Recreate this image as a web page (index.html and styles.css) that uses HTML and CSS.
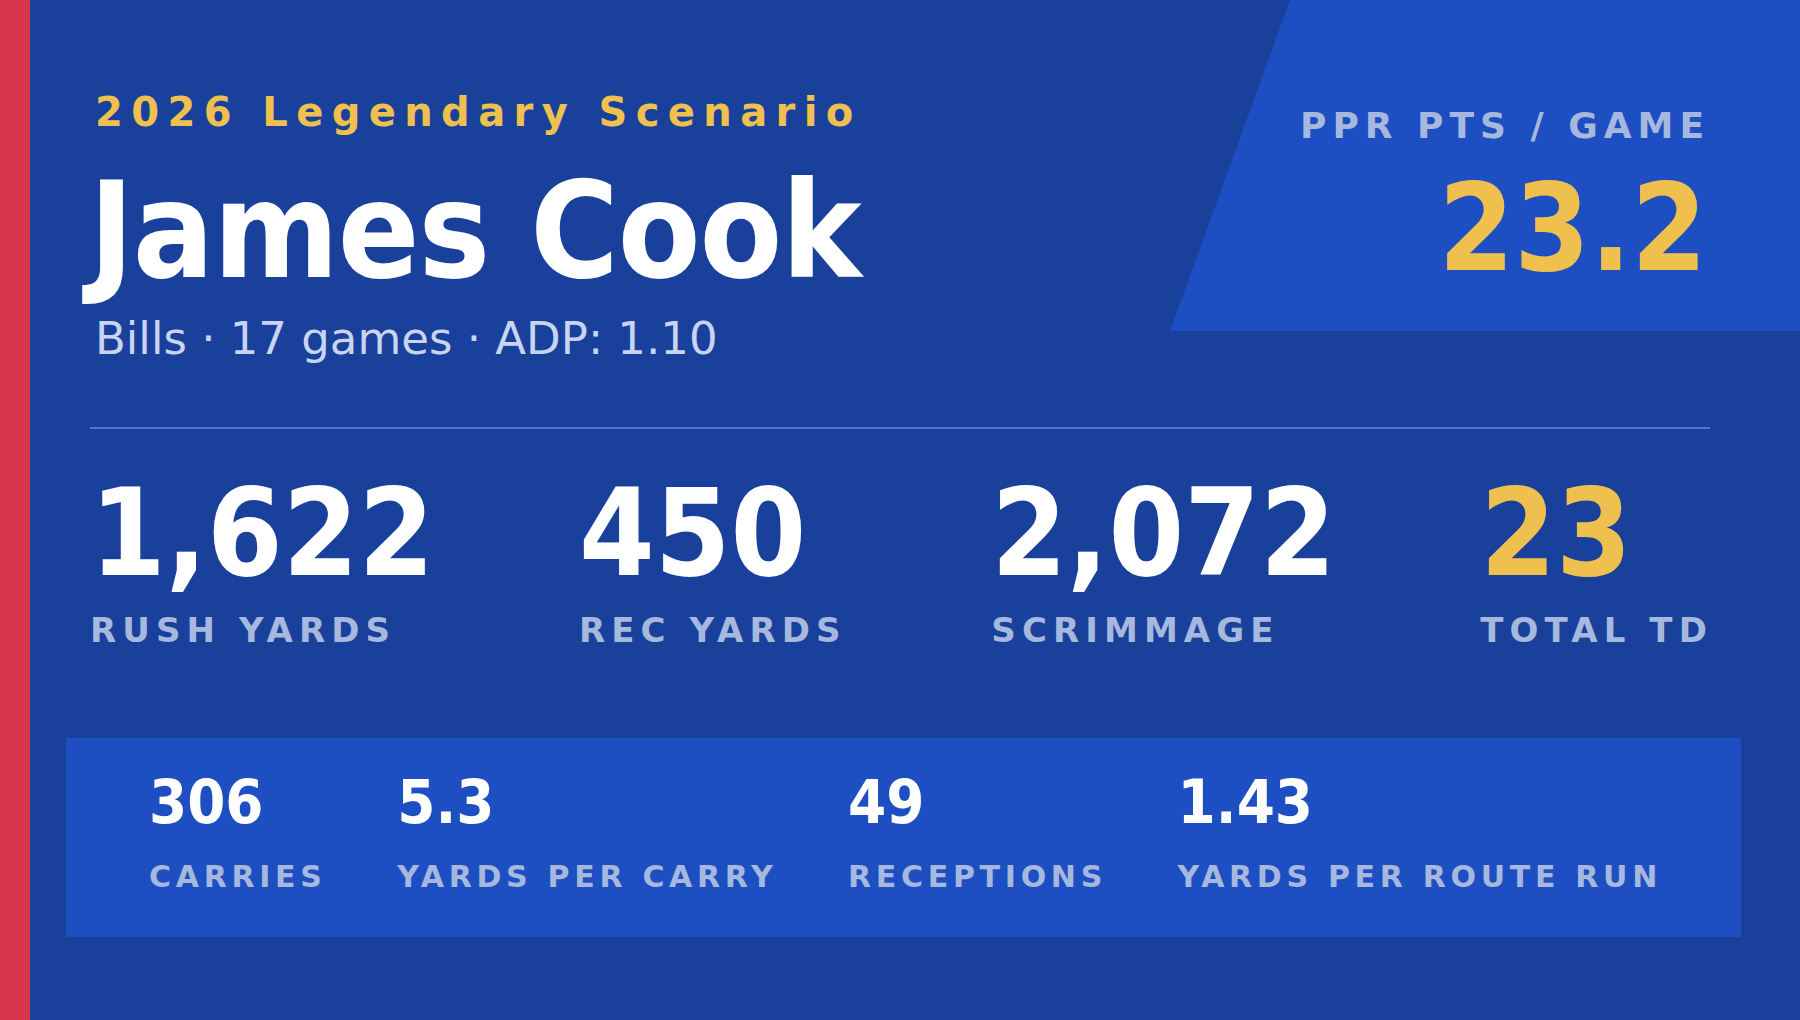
FILE: index.html
```html
<!DOCTYPE html>
<html lang="en">
<head>
<meta charset="utf-8">
<title>James Cook — 2026 Legendary Scenario</title>
<link rel="stylesheet" href="styles.css">
</head>
<body>
<div class="card">
  <div class="accent"></div>
  <main class="content">
    <header class="hero">
      <div class="identity">
        <div class="eyebrow">2026 Legendary Scenario</div>
        <h1 class="name">James Cook</h1>
        <div class="meta">Bills · 17 games · ADP: 1.10</div>
      </div>
      <div class="ppg">
        <div class="ppg-label">PPR PTS / GAME</div>
        <div class="ppg-value">23.2</div>
      </div>
    </header>
    <div class="divider"></div>
    <section class="stats">
      <div class="stat">
        <div class="stat-value">1,622</div>
        <div class="stat-label">RUSH YARDS</div>
      </div>
      <div class="stat">
        <div class="stat-value">450</div>
        <div class="stat-label">REC YARDS</div>
      </div>
      <div class="stat">
        <div class="stat-value">2,072</div>
        <div class="stat-label">SCRIMMAGE</div>
      </div>
      <div class="stat">
        <div class="stat-value gold">23</div>
        <div class="stat-label">TOTAL TD</div>
      </div>
    </section>
    <section class="sub">
      <div class="sub-item">
        <div class="sub-value">306</div>
        <div class="sub-label">CARRIES</div>
      </div>
      <div class="sub-item">
        <div class="sub-value">5.3</div>
        <div class="sub-label">YARDS PER CARRY</div>
      </div>
      <div class="sub-item">
        <div class="sub-value">49</div>
        <div class="sub-label">RECEPTIONS</div>
      </div>
      <div class="sub-item">
        <div class="sub-value">1.43</div>
        <div class="sub-label">YARDS PER ROUTE RUN</div>
      </div>
    </section>
  </main>
</div>
</body>
</html>
```
FILE: styles.css
```css
* { box-sizing: border-box; }

html, body {
  margin: 0;
  padding: 0;
}

body {
  width: 1800px;
  height: 1020px;
  overflow: hidden;
  background: #19409b;
  font-family: "DejaVu Sans", "Liberation Sans", sans-serif;
  color: #ffffff;
}

.card {
  display: flex;
  width: 1800px;
  height: 1020px;
}

.accent {
  flex: none;
  width: 30px;
  background: #d5354d;
}

.content {
  flex: 1;
  display: flex;
  flex-direction: column;
  padding: 0 90px 0 60px;
}

/* ---------- hero ---------- */
.hero {
  display: flex;
  justify-content: space-between;
  align-items: flex-start;
}

.identity {
  padding: 92px 0 0 5px;
}

.eyebrow {
  font-size: 40px;
  line-height: 1;
  font-weight: bold;
  letter-spacing: 8.4px;
  color: #f0c04e;
}

.name {
  margin: 32px 0 0 -6px;
  font-family: "DejaVu Sans Condensed", "DejaVu Sans", sans-serif;
  font-size: 134px;
  line-height: 1;
  font-weight: bold;
  letter-spacing: -1px;
  color: #ffffff;
}

.meta {
  margin-top: 18px;
  font-size: 45px;
  line-height: 1;
  color: #c9d5f0;
}

.ppg {
  flex: none;
  width: 630px;
  height: 331px;
  margin-right: -90px;
  padding: 108px 90px 0 0;
  background: #1d4fc3;
  clip-path: polygon(120px 0, 100% 0, 100% 100%, 0 100%);
  text-align: right;
}

.ppg-label {
  font-size: 36px;
  line-height: 1;
  font-weight: bold;
  letter-spacing: 6px;
  color: #a7b8de;
}

.ppg-value {
  margin: 24px 3px 0 0;
  font-family: "DejaVu Sans Condensed", "DejaVu Sans", sans-serif;
  font-size: 121px;
  line-height: 1;
  font-weight: bold;
  color: #f0c04e;
}

/* ---------- divider ---------- */
.divider {
  height: 2px;
  margin-top: 66px;
  background: #5273c9;
}

/* ---------- main stats ---------- */
.stats {
  display: flex;
  justify-content: space-between;
  margin: 44px -3px 0 0;
}

.stat-value {
  font-family: "DejaVu Sans Condensed", "DejaVu Sans", sans-serif;
  font-size: 121px;
  line-height: 1;
  font-weight: bold;
  color: #ffffff;
}

.stat-value.gold {
  color: #f0c04e;
}

.stat-label {
  margin-top: 19px;
  font-size: 34px;
  line-height: 1;
  font-weight: bold;
  letter-spacing: 6.1px;
  color: #a7b8de;
}

/* ---------- secondary panel ---------- */
.sub {
  display: flex;
  justify-content: space-between;
  margin: 91px -31px 0 -24px;
  padding: 33px 79px 45px 83px;
  background: #1d4fc3;
}

.sub-value {
  font-family: "DejaVu Sans Condensed", "DejaVu Sans", sans-serif;
  font-size: 61px;
  line-height: 1;
  font-weight: bold;
  color: #ffffff;
}

.sub-label {
  margin-top: 30px;
  font-size: 30px;
  line-height: 1;
  font-weight: bold;
  letter-spacing: 4.7px;
  color: #a7b8de;
}
```
